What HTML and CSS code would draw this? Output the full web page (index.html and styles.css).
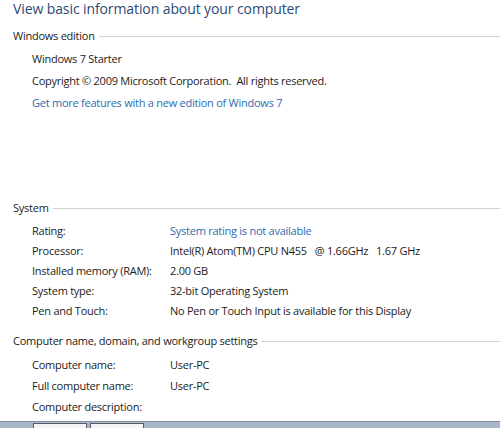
FILE: index.html
```html
<!DOCTYPE html>
<html>
<head>
<meta charset="utf-8">
<link rel="stylesheet" href="styles.css">
</head>
<body>
<div class="page">
  <h1 class="title">View basic information about your computer</h1>

  <section class="group">
    <div class="group-head"><span>Windows edition</span><span class="rule"></span></div>
    <div class="lines">
      <div class="line">Windows 7 Starter</div>
      <div class="line">Copyright © 2009 Microsoft Corporation.&nbsp; All rights reserved.</div>
      <div class="line link">Get more features with a new edition of Windows 7</div>
    </div>
  </section>

  <section class="group system">
    <div class="group-head"><span>System</span><span class="rule"></span></div>
    <div class="rows">
      <div class="label">Rating:</div><div class="value link">System rating is not available</div>
      <div class="label">Processor:</div><div class="value">Intel(R) Atom(TM) CPU N455&nbsp;&nbsp; @ 1.66GHz&nbsp;&nbsp; 1.67 GHz</div>
      <div class="label">Installed memory (RAM):</div><div class="value">2.00 GB</div>
      <div class="label">System type:</div><div class="value">32-bit Operating System</div>
      <div class="label">Pen and Touch:</div><div class="value">No Pen or Touch Input is available for this Display</div>
    </div>
  </section>

  <section class="group computer">
    <div class="group-head"><span>Computer name, domain, and workgroup settings</span><span class="rule"></span></div>
    <div class="rows">
      <div class="label">Computer name:</div><div class="value">User-PC</div>
      <div class="label">Full computer name:</div><div class="value">User-PC</div>
      <div class="label">Computer description:</div><div class="value"></div>
    </div>
  </section>
</div>
<div class="taskbar">
  <div class="btn"></div>
  <div class="btn"></div>
</div>
</body>
</html>
```
FILE: styles.css
```css
html, body {
  margin: 0;
  padding: 0;
  background: #ffffff;
}
body {
  width: 500px;
  height: 428px;
  overflow: hidden;
  position: relative;
  font-family: "Open Sans", "Noto Sans", sans-serif;
  font-size: 11px;
  letter-spacing: -0.25px;
  color: #1b1b1b;
}
.page {
  padding: 0 0 0 13px;
}
.title {
  margin: 0;
  font-weight: normal;
  font-size: 14px;
  line-height: 18px;
  color: #2b4a78;
  letter-spacing: -0.1px;
}
.group-head {
  display: flex;
  align-items: center;
  height: 16px;
  margin-top: 9px;
}
.group-head .rule {
  flex: 1;
  height: 1px;
  background: #d4d4d4;
  margin-left: 4px;
  margin-top: 2px;
}
.lines {
  padding-left: 19px;
  padding-top: 5px;
}
.line {
  height: 22px;
  line-height: 22px;
}
.link {
  color: #2a6cb0;
}
.system { margin-top: 85px; }
.system .group-head { margin-top: 0; }
.rows {
  display: grid;
  grid-template-columns: 138px 1fr;
  grid-auto-rows: 20px;
  padding-left: 19px;
  padding-top: 6px;
  line-height: 20px;
}
.computer { margin-top: 11px; }
.computer .group-head { margin-top: 0; }
.computer .rows { grid-auto-rows: 21px; padding-top: 7px; }
.taskbar {
  position: absolute;
  left: 0;
  right: 0;
  bottom: 0;
  height: 5px;
  border-top: 1px solid #7f8f9f;
  background: #a8b8c9;
  display: flex;
  gap: 3px;
  padding-left: 33px;
  padding-top: 1px;
}
.btn {
  width: 52px;
  height: 10px;
  border: 1px solid #555c66;
  background: #f4f4f4;
}
```
